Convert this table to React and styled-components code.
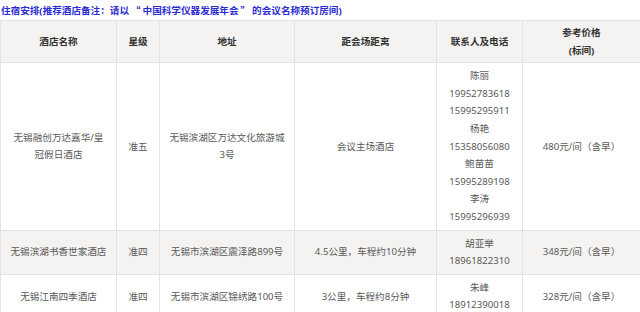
import React from "react";
import styled, { createGlobalStyle } from "styled-components";

const Global = createGlobalStyle`
  html, body { margin: 0; padding: 0; background: #fff; }
  body { font-family: "Noto Sans", "Noto Sans CJK SC", sans-serif; }
`;

const Page = styled.div`
  width: 640px;
  overflow: hidden;
`;

const Title = styled.div`
  height: 20px;
  line-height: 20px;
  font-family: "Noto Sans", "Noto Sans CJK SC", sans-serif;
  font-size: 9.6px;
  font-weight: 700;
  color: #2b2bd2;
  white-space: nowrap;
  padding-left: 1px;
`;

const Quote = styled.span`
  font-family: "Noto Sans CJK SC", sans-serif;
  padding: 0 2px;
`;

const Table = styled.table`
  width: 640px;
  table-layout: fixed;
  border-collapse: collapse;
  font-size: 9.6px;
  line-height: 17.6px;
  color: #5a5a5a;
`;

const Row = styled.tr`
  background: ${(p) => (p.$shade ? "#f4f3f1" : "#ffffff")};
`;

const Th = styled.th`
  border: 1px solid #e3e3e3;
  background: #f4f3f1;
  color: #333;
  font-weight: 700;
  padding: 3px 8px;
  text-align: center;
  vertical-align: middle;
`;

const Td = styled.td`
  border: 1px solid #e3e3e3;
  padding: 4px 8px;
  text-align: center;
  vertical-align: middle;
`;

const Line = styled.div``;

const cols = [116, 43, 135, 142, 86, 118];

const rows = [
  {
    name: "无锡融创万达嘉华/皇冠假日酒店",
    star: "准五",
    addr: "无锡滨湖区万达文化旅游城3号",
    dist: "会议主场酒店",
    contacts: [
      "陈丽",
      "19952783618",
      "15995295911",
      "杨艳",
      "15358056080",
      "鲍苗苗",
      "15995289198",
      "李涛",
      "15995296939",
    ],
    price: "480元/间（含早）",
  },
  {
    name: "无锡滨湖书香世家酒店",
    star: "准四",
    addr: "无锡市滨湖区震泽路899号",
    dist: "4.5公里，车程约10分钟",
    contacts: ["胡亚举", "18961822310"],
    price: "348元/间（含早）",
    shade: true,
  },
  {
    name: "无锡江南四季酒店",
    star: "准四",
    addr: "无锡市滨湖区锦绣路100号",
    dist: "3公里，车程约8分钟",
    contacts: ["朱峰", "18912390018"],
    price: "328元/间（含早）",
  },
];

export default function App() {
  return (
    <Page>
      <Global />
      <Title>
        住宿安排(推荐酒店备注：请以<Quote>“</Quote>中国科学仪器发展年会<Quote>”</Quote>的会议名称预订房间)
      </Title>
      <Table>
        <colgroup>
          {cols.map((w, i) => (
            <col key={i} style={{ width: w }} />
          ))}
        </colgroup>
        <thead>
          <tr>
            <Th>酒店名称</Th>
            <Th>星级</Th>
            <Th>地址</Th>
            <Th>距会场距离</Th>
            <Th>联系人及电话</Th>
            <Th>
              <Line>参考价格</Line>
              <Line>(标间)</Line>
            </Th>
          </tr>
        </thead>
        <tbody>
          {rows.map((r, i) => (
            <Row key={i} $shade={r.shade}>
              <Td>{r.name}</Td>
              <Td>{r.star}</Td>
              <Td>{r.addr}</Td>
              <Td>{r.dist}</Td>
              <Td>
                {r.contacts.map((c, j) => (
                  <Line key={j}>{c}</Line>
                ))}
              </Td>
              <Td>{r.price}</Td>
            </Row>
          ))}
        </tbody>
      </Table>
    </Page>
  );
}
